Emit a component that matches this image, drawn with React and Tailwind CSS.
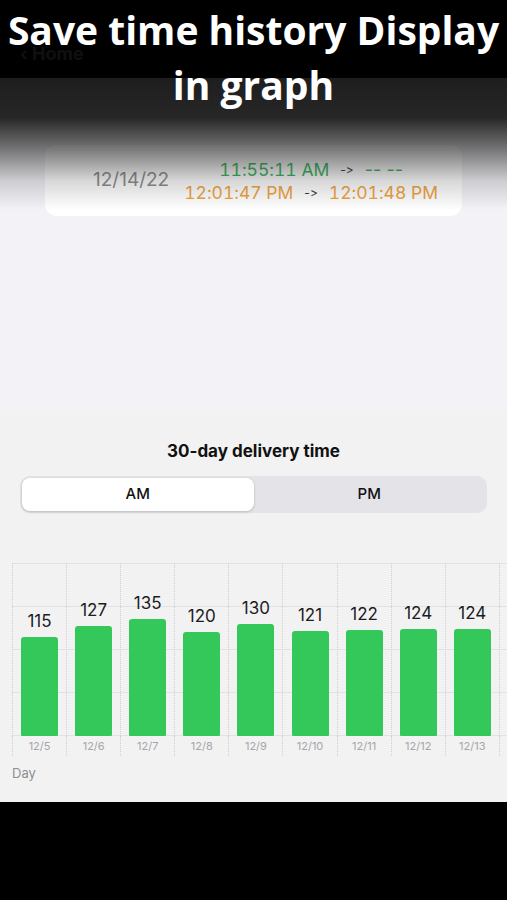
import React from 'react'

const days = [
  { label: '12/5', value: 115 },
  { label: '12/6', value: 127 },
  { label: '12/7', value: 135 },
  { label: '12/8', value: 120 },
  { label: '12/9', value: 130 },
  { label: '12/10', value: 121 },
  { label: '12/11', value: 122 },
  { label: '12/12', value: 124 },
  { label: '12/13', value: 124 },
  { label: '', value: null },
]

const PLOT_H = 173
const MAX = 200

function HistoryCard() {
  return (
    <div className="mx-[45px] mt-[67px] h-[71px] bg-white rounded-xl flex items-center pl-[48px] gap-[15px]">
      <span className="text-[19px] text-[#8a8a8e]">12/14/22</span>
      <div className="flex flex-col items-center leading-[23px]">
        <div className="flex items-center gap-[11px]">
          <span className="text-[17.5px] tabular-nums text-[#34b55a]">11:55:11 AM</span>
          <span className="text-[12px] text-[#333]">-&gt;</span>
          <span className="text-[18px] text-[#34b55a]">-- --</span>
        </div>
        <div className="flex items-center gap-[11px]">
          <span className="text-[17.5px] tabular-nums text-[#f0a23c]">12:01:47 PM</span>
          <span className="text-[12px] text-[#333]">-&gt;</span>
          <span className="text-[17.5px] tabular-nums text-[#f0a23c]">12:01:48 PM</span>
        </div>
      </div>
    </div>
  )
}

function DeliveryChart() {
  return (
    <div className="mt-[50px] pl-[12px]">
      {/* plot area */}
      <div className="relative h-[173px]">
        <div className="absolute inset-0 flex flex-col">
          <div className="flex-1 border-t border-[#e2e2e2]" />
          <div className="flex-1 border-t border-[#e2e2e2]" />
          <div className="flex-1 border-t border-[#e2e2e2]" />
          <div className="flex-1 border-t border-b border-[#e2e2e2]" />
        </div>
        <div className="relative flex h-full">
          {days.map((d, i) => (
            <div
              key={i}
              className="w-[54.1px] shrink-0 h-full border-l border-dotted border-[#cfcfcf] flex flex-col justify-end items-center"
            >
              {d.value && (
                <>
                  <span className="text-[17px] leading-[20px] text-[#1c1c1e] mb-[6px]">{d.value}</span>
                  <div
                    className="w-[37px] bg-[#34c759] rounded-t-[3px] rounded-b-[1px]"
                    style={{ height: (d.value / MAX) * PLOT_H }}
                  />
                </>
              )}
            </div>
          ))}
        </div>
      </div>
      {/* x axis */}
      <div className="flex h-[20px]">
        {days.map((d, i) => (
          <div
            key={i}
            className="w-[54.1px] shrink-0 border-l border-dotted border-[#cfcfcf] flex justify-center items-center text-[11px] text-[#a5a5aa]"
          >
            {d.label}
          </div>
        ))}
      </div>
      <div className="mt-[9px] text-[13px] leading-[16px] text-[#8e8e93]">Day</div>
    </div>
  )
}

export default function App() {
  return (
    <div
      className="relative w-[507px] h-[900px] overflow-hidden flex flex-col bg-[#f2f2f7] [font-feature-settings:'calt'_0]"
      style={{ fontFamily: 'Inter, "Liberation Sans", sans-serif' }}
    >
      {/* dark nav */}
      <div className="h-[78px] shrink-0 bg-black flex items-center pl-[20px] pt-[28px]">
        <span className="text-[#101010] text-[18px] font-bold">‹ Home</span>
      </div>

      {/* history list */}
      <div className="relative h-[332px] shrink-0">
        <HistoryCard />
        <div className="absolute top-0 left-0 right-0 h-[132px] pointer-events-none bg-[linear-gradient(to_bottom,rgba(30,30,30,1)_0%,rgba(32,32,32,0.97)_30%,rgba(40,40,40,0.6)_55%,rgba(60,60,60,0.2)_78%,rgba(60,60,60,0)_100%)]" />
      </div>

      {/* chart panel */}
      <div className="h-[392px] shrink-0 bg-[#f2f2f2] flex flex-col">
        <div className="pt-[30px] text-center text-[17px] leading-[22px] font-bold text-[#111]">
          30-day delivery time
        </div>
        <div className="mt-[14px] mx-[20px] h-[37px] bg-[#e3e3e8] rounded-[10px] p-[2px] grid grid-cols-2">
          <div className="bg-white rounded-[8px] shadow-[0_1px_3px_rgba(0,0,0,0.18)] flex items-center justify-center text-[15px] font-medium text-[#111]">
            AM
          </div>
          <div className="flex items-center justify-center text-[15px] font-medium text-[#111]">PM</div>
        </div>
        <DeliveryChart />
      </div>

      <div className="flex-1 bg-black" />

      {/* caption overlay */}
      <div
        className="absolute top-[2px] left-0 right-0 text-center text-white font-bold text-[39px] leading-[55px]"
        style={{ fontFamily: '"Open Sans", "Noto Sans", sans-serif' }}
      >
        Save time history Display
        <br />
        in graph
      </div>
    </div>
  )
}
